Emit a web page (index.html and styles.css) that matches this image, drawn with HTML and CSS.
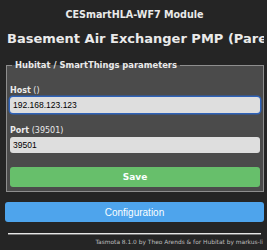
FILE: index.html
```html
<!DOCTYPE html>
<html lang="en">
<head>
    <meta charset="UTF-8">
    <meta name="viewport" content="width=device-width, initial-scale=1.0">
    <title>CESmartHLA-WF7 Module - Hubitat</title>
    <link rel="stylesheet" href="styles.css">
</head>
<body>
    <div class="page">
        <h3 class="module">CESmartHLA-WF7 Module</h3>
        <h2 class="device">Basement Air Exchanger PMP (Parent)</h2>

        <fieldset class="params">
            <legend><b>Hubitat / SmartThings parameters</b></legend>
            <form>
                <label class="field-label" for="host"><b>Host</b> ()</label>
                <input class="field focused" id="host" type="text" value="192.168.123.123">
                <label class="field-label" for="port"><b>Port</b> (39501)</label>
                <input class="field" id="port" type="text" value="39501">
                <button class="btn btn-save" type="button">Save</button>
            </form>
        </fieldset>

        <button class="btn btn-config" type="button">Configuration</button>

        <hr class="rule">
        <div class="footer">Tasmota 8.1.0 by Theo Arends &amp; for Hubitat by markus-li</div>
    </div>
</body>
</html>
```

FILE: styles.css
```css
body {
    margin: 0;
    background: #252525;
    color: #eaeaea;
    font-family: "DejaVu Sans", Verdana, sans-serif;
}
.page {
    padding: 0 3px 0 5px;
}
.module {
    margin: 9px 0 0;
    font-size: 9.6px;
    line-height: 11px;
    text-align: center;
}
.device {
    margin: 11px 0 0;
    padding-left: 2px;
    font-size: 13px;
    line-height: 15px;
    white-space: nowrap;
    overflow: hidden;
}
.params {
    margin: 14px 0 0 1px;
    padding: 0 3px 4px;
    border: 1px solid #8e8e8e;
    background: #4b4b4b;
}
.params legend {
    margin-left: 2px;
    padding: 0 3px;
    font-size: 8.4px;
    line-height: 10px;
}
.params form {
    display: flex;
    flex-direction: column;
}
.field-label {
    margin-top: 16px;
    font-size: 8px;
    line-height: 10px;
}
.field-label + .field + .field-label {
    margin-top: 13px;
}
.field {
    margin: 1px 0 0;
    height: 16px;
    padding: 0 3px;
    box-sizing: border-box;
    border: 0;
    border-radius: 3px;
    background: #dedede;
    color: #000;
    font-family: "Liberation Sans", Arial, sans-serif;
    font-size: 8.5px;
}
.field.focused {
    box-shadow: 0 0 0 1.5px #2f62b8;
}
.btn {
    display: block;
    width: 100%;
    height: 20px;
    border: 0;
    border-radius: 3px;
    color: #faffff;
}
.btn-save {
    margin-top: 14px;
    background: #67bf6b;
    font-family: "DejaVu Sans", Verdana, sans-serif;
    font-weight: bold;
    font-size: 9px;
}
.btn-config {
    margin-top: 10px;
    background: #4ea4ec;
    font-family: "Liberation Sans", Arial, sans-serif;
    font-size: 10px;
}
.rule {
    margin: 11px 3px 0;
    height: 0;
    border: 0;
    border-top: 1px solid #e6e6e6;
    border-bottom: 1px solid #777;
}
.footer {
    margin-top: 3px;
    padding-right: 1px;
    text-align: right;
    font-size: 5.9px;
    line-height: 8px;
    color: #bdbdbd;
}
```
